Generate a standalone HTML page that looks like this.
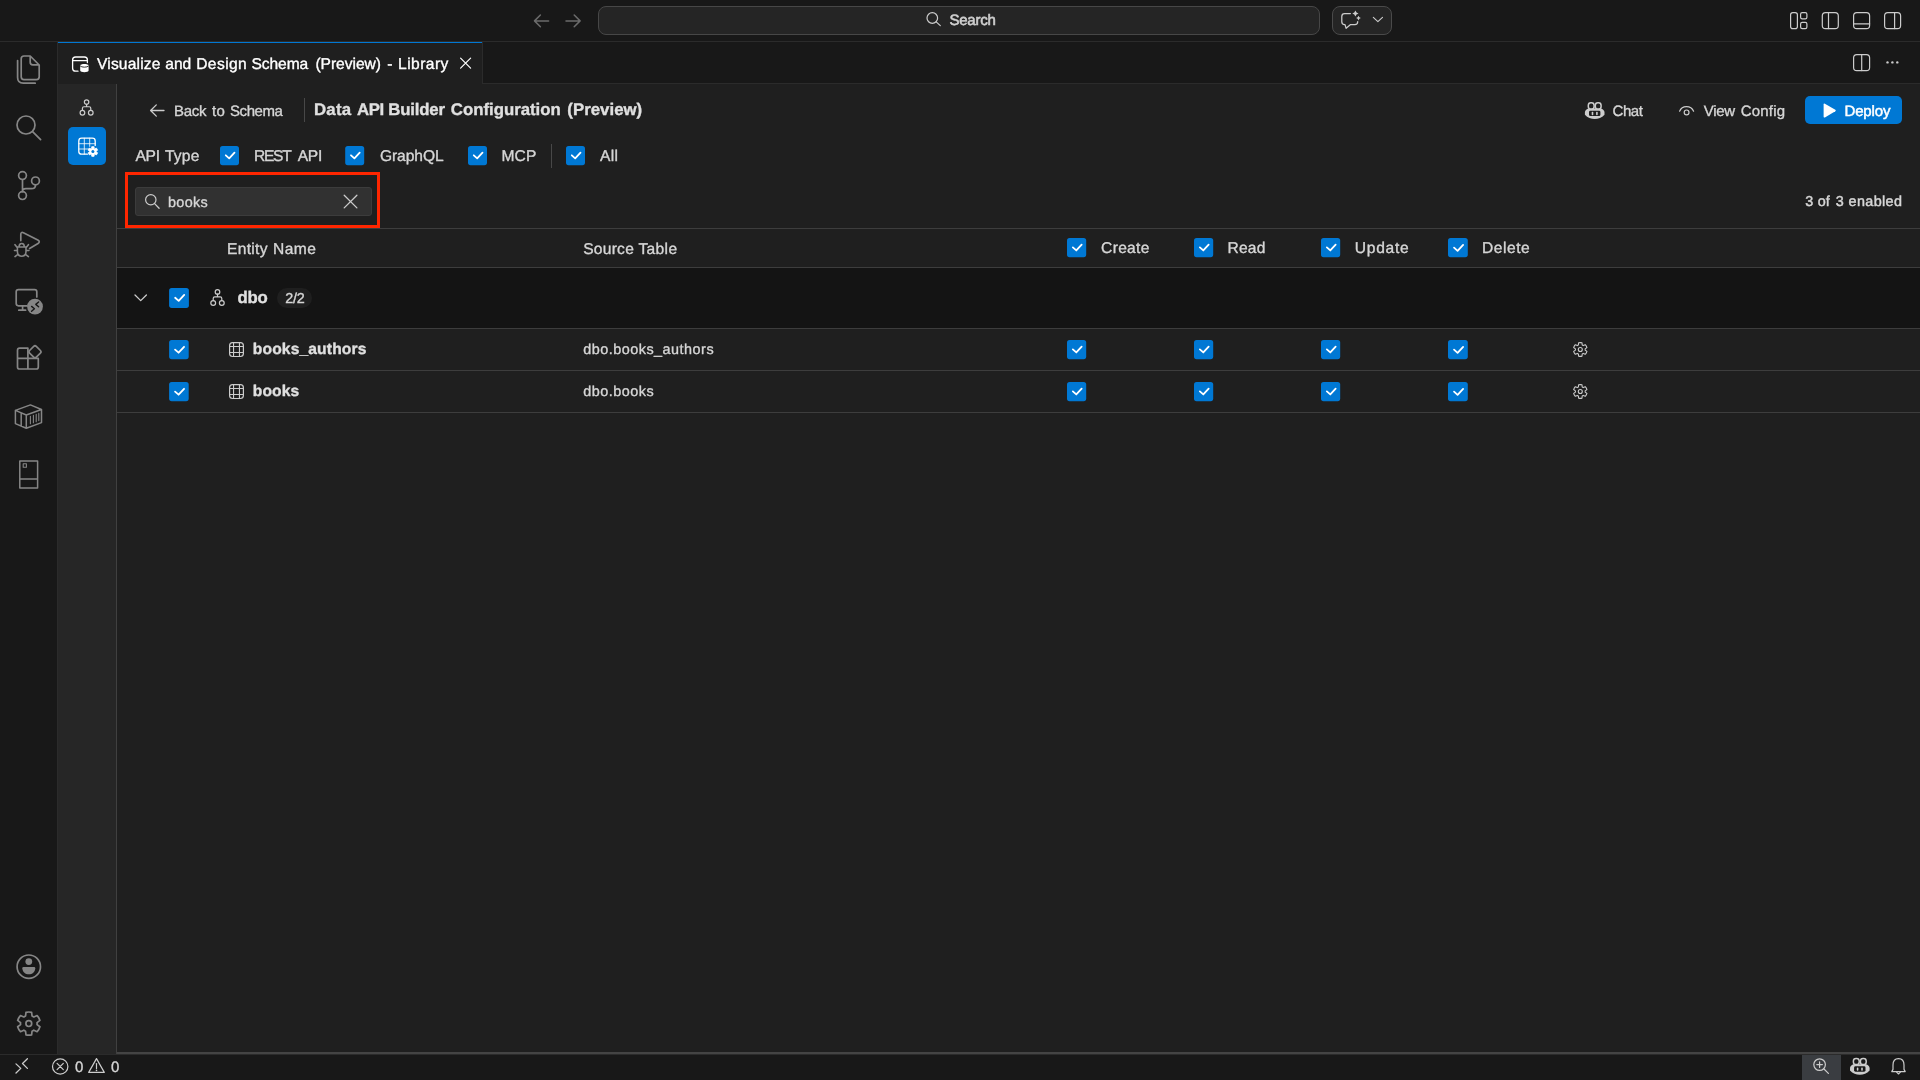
<!DOCTYPE html>
<html lang="en">
<head>
<meta charset="utf-8">
<title>Visualize and Design Schema (Preview) - Library</title>
<style>
html,body{margin:0;padding:0;}
body{width:1920px;height:1080px;overflow:hidden;background:#1f1f1f;position:relative;font-family:"Liberation Sans",sans-serif;}
.a{position:absolute;box-sizing:border-box;}
.t{position:absolute;white-space:pre;font-family:"Liberation Sans",sans-serif;text-rendering:geometricPrecision;-webkit-text-stroke:0.35px currentColor;}
svg{position:absolute;overflow:visible;}
.cb{position:absolute;width:19px;height:19px;background:#0078d4;border-radius:2.5px;}
.cb svg{left:0;top:0;}
.hl{position:absolute;height:1px;background:#2b2b2b;}
.vl{position:absolute;width:1px;background:#2b2b2b;}
</style>
</head>
<body>
<!-- ===== title bar ===== -->
<div class="a" id="titlebar" style="left:0;top:0;width:1920px;height:41px;background:#181818;"></div>
<div class="hl" style="left:0;top:41px;width:1920px;"></div>
<div class="a" id="cmdcenter" style="left:598px;top:6px;width:722px;height:29px;background:#252525;border:1px solid #474747;border-radius:8px;"></div>
<div class="a" id="chatbtn" style="left:1332px;top:6px;width:60px;height:29px;background:#252525;border:1px solid #4a4a4a;border-radius:8px;"></div>

<!-- ===== activity bar ===== -->
<div class="a" id="activitybar" style="left:0;top:42px;width:57px;height:1012px;background:#181818;"></div>
<div class="vl" style="left:57px;top:42px;height:1012px;"></div>

<!-- ===== tab bar ===== -->
<div class="a" id="tabbar" style="left:58px;top:42px;width:1862px;height:41px;background:#181818;"></div>
<div class="hl" style="left:58px;top:83px;width:1862px;"></div>
<div class="a" id="tab" style="left:58px;top:42px;width:424px;height:42px;background:#1f1f1f;border-top:1px solid #0078d4;"></div>
<div class="vl" style="left:482px;top:42px;height:42px;"></div>

<!-- ===== inner sidebar ===== -->
<div class="a" id="innerside" style="left:58px;top:84px;width:58px;height:970px;background:#262626;"></div>
<div class="vl" style="left:116px;top:84px;height:970px;background:#404040;"></div>
<div class="a" id="activebtn" style="left:68px;top:127px;width:38px;height:38px;background:#0078d4;border-radius:5px;"></div>

<!-- ===== toolbar ===== -->
<div class="vl" style="left:304px;top:98px;height:24px;background:#484848;"></div>
<div class="a" id="deploy" style="left:1805px;top:96px;width:97px;height:28px;background:#0078d4;border-radius:5px;"></div>
<div class="vl" style="left:551px;top:144px;height:24px;background:#484848;"></div>

<!-- ===== search ===== -->
<div class="a" id="searchbox" style="left:135px;top:187px;width:237px;height:29px;background:#313131;border:1px solid #3c3c3c;border-radius:3px;"></div>
<div class="a" id="redrect" style="left:125px;top:172px;width:255px;height:56px;border:3px solid #ff2600;"></div>

<!-- ===== table ===== -->
<div class="hl" style="left:117px;top:228px;width:1803px;background:#3d3d3d;"></div>
<div class="hl" style="left:117px;top:267px;width:1803px;background:#3d3d3d;"></div>
<div class="a" id="grouprow" style="left:117px;top:268px;width:1803px;height:60px;background:#141414;"></div>
<div class="hl" style="left:117px;top:328px;width:1803px;background:#3d3d3d;"></div>
<div class="hl" style="left:117px;top:370px;width:1803px;background:#3d3d3d;"></div>
<div class="hl" style="left:117px;top:412px;width:1803px;background:#3d3d3d;"></div>
<div class="a" id="pill" style="left:277px;top:288px;width:35px;height:20px;background:#1f1f1f;border-radius:10px;"></div>

<!-- checkboxes -->


<!-- ===== status bar ===== -->
<div class="hl" style="left:117px;top:1052px;width:1803px;height:2px;background:#444444;"></div>
<div class="a" id="statusbar" style="left:0;top:1055px;width:1920px;height:25px;background:#181818;"></div>
<div class="hl" style="left:0;top:1054px;width:1920px;"></div>
<div class="a" id="zoombg" style="left:1802px;top:1055px;width:39px;height:25px;background:#3a3d41;"></div>

<!-- ===== icons ===== -->
<svg id="ov" width="1920" height="1080" viewBox="0 0 1920 1080" style="left:0;top:0;pointer-events:none">
<rect x="220" y="146" width="19" height="19.2" rx="2.6" fill="#0078d4"/>
<path d="M225.80 155.30L229.20 158.30L234.50 152.60" fill="none" stroke="#fff" stroke-width="1.8" stroke-linecap="round" stroke-linejoin="round"/>
<rect x="345.2" y="146" width="19" height="19.2" rx="2.6" fill="#0078d4"/>
<path d="M351.00 155.30L354.40 158.30L359.70 152.60" fill="none" stroke="#fff" stroke-width="1.8" stroke-linecap="round" stroke-linejoin="round"/>
<rect x="468" y="146" width="19" height="19.2" rx="2.6" fill="#0078d4"/>
<path d="M473.80 155.30L477.20 158.30L482.50 152.60" fill="none" stroke="#fff" stroke-width="1.8" stroke-linecap="round" stroke-linejoin="round"/>
<rect x="566" y="146" width="19" height="19.2" rx="2.6" fill="#0078d4"/>
<path d="M571.80 155.30L575.20 158.30L580.50 152.60" fill="none" stroke="#fff" stroke-width="1.8" stroke-linecap="round" stroke-linejoin="round"/>
<rect x="1067" y="238" width="19.2" height="19.2" rx="2.6" fill="#0078d4"/>
<path d="M1072.86 247.40L1076.30 250.43L1081.65 244.67" fill="none" stroke="#fff" stroke-width="1.8" stroke-linecap="round" stroke-linejoin="round"/>
<rect x="1067" y="340" width="19.2" height="19.2" rx="2.6" fill="#0078d4"/>
<path d="M1072.86 349.40L1076.30 352.43L1081.65 346.67" fill="none" stroke="#fff" stroke-width="1.8" stroke-linecap="round" stroke-linejoin="round"/>
<rect x="1067" y="382" width="19.2" height="19.2" rx="2.6" fill="#0078d4"/>
<path d="M1072.86 391.40L1076.30 394.43L1081.65 388.67" fill="none" stroke="#fff" stroke-width="1.8" stroke-linecap="round" stroke-linejoin="round"/>
<rect x="1194" y="238" width="19.2" height="19.2" rx="2.6" fill="#0078d4"/>
<path d="M1199.86 247.40L1203.30 250.43L1208.65 244.67" fill="none" stroke="#fff" stroke-width="1.8" stroke-linecap="round" stroke-linejoin="round"/>
<rect x="1194" y="340" width="19.2" height="19.2" rx="2.6" fill="#0078d4"/>
<path d="M1199.86 349.40L1203.30 352.43L1208.65 346.67" fill="none" stroke="#fff" stroke-width="1.8" stroke-linecap="round" stroke-linejoin="round"/>
<rect x="1194" y="382" width="19.2" height="19.2" rx="2.6" fill="#0078d4"/>
<path d="M1199.86 391.40L1203.30 394.43L1208.65 388.67" fill="none" stroke="#fff" stroke-width="1.8" stroke-linecap="round" stroke-linejoin="round"/>
<rect x="1321" y="238" width="19.2" height="19.2" rx="2.6" fill="#0078d4"/>
<path d="M1326.86 247.40L1330.30 250.43L1335.65 244.67" fill="none" stroke="#fff" stroke-width="1.8" stroke-linecap="round" stroke-linejoin="round"/>
<rect x="1321" y="340" width="19.2" height="19.2" rx="2.6" fill="#0078d4"/>
<path d="M1326.86 349.40L1330.30 352.43L1335.65 346.67" fill="none" stroke="#fff" stroke-width="1.8" stroke-linecap="round" stroke-linejoin="round"/>
<rect x="1321" y="382" width="19.2" height="19.2" rx="2.6" fill="#0078d4"/>
<path d="M1326.86 391.40L1330.30 394.43L1335.65 388.67" fill="none" stroke="#fff" stroke-width="1.8" stroke-linecap="round" stroke-linejoin="round"/>
<rect x="1448" y="238" width="19.8" height="19.2" rx="2.6" fill="#0078d4"/>
<path d="M1454.04 247.69L1457.59 250.82L1463.11 244.88" fill="none" stroke="#fff" stroke-width="1.8" stroke-linecap="round" stroke-linejoin="round"/>
<rect x="1448" y="340" width="19.8" height="19.2" rx="2.6" fill="#0078d4"/>
<path d="M1454.04 349.69L1457.59 352.82L1463.11 346.88" fill="none" stroke="#fff" stroke-width="1.8" stroke-linecap="round" stroke-linejoin="round"/>
<rect x="1448" y="382" width="19.8" height="19.2" rx="2.6" fill="#0078d4"/>
<path d="M1454.04 391.69L1457.59 394.82L1463.11 388.88" fill="none" stroke="#fff" stroke-width="1.8" stroke-linecap="round" stroke-linejoin="round"/>
<rect x="169.1" y="288.1" width="19.8" height="19.8" rx="2.6" fill="#0078d4"/>
<path d="M175.14 297.79L178.69 300.92L184.21 294.98" fill="none" stroke="#fff" stroke-width="1.8" stroke-linecap="round" stroke-linejoin="round"/>
<rect x="169.1" y="340" width="19.6" height="19.2" rx="2.6" fill="#0078d4"/>
<path d="M175.08 349.59L178.59 352.69L184.06 346.81" fill="none" stroke="#fff" stroke-width="1.8" stroke-linecap="round" stroke-linejoin="round"/>
<rect x="169.1" y="382" width="19.6" height="19.2" rx="2.6" fill="#0078d4"/>
<path d="M175.08 391.59L178.59 394.69L184.06 388.81" fill="none" stroke="#fff" stroke-width="1.8" stroke-linecap="round" stroke-linejoin="round"/>
<path d="M548.6 20.9H534.6M540.4 15L534.5 20.9L540.4 26.8" fill="none" stroke="#6b6b6b" stroke-width="1.5" stroke-linecap="round" stroke-linejoin="round" />
<path d="M566 20.9H580M574.2 15L580.1 20.9L574.2 26.8" fill="none" stroke="#6b6b6b" stroke-width="1.5" stroke-linecap="round" stroke-linejoin="round" />
<circle cx="932.3" cy="18" r="5.3" fill="none" stroke="#cccccc" stroke-width="1.2"/>
<path d="M936.2 21.9L940.3 25.6" fill="none" stroke="#cccccc" stroke-width="1.2" stroke-linecap="round" stroke-linejoin="round" />
<path d="M1350.4 13.6H1344.6Q1341.8 13.6 1341.8 16.4V21.8Q1341.8 24.6 1344.6 24.6H1345L1346.1 28.3L1350.6 24.6H1354.9Q1357.7 24.6 1357.7 21.8V21.6" fill="none" stroke="#cccccc" stroke-width="1.25" stroke-linecap="round" stroke-linejoin="round" />
<path d="M1355.4 10.4Q1356.082 12.818 1358.5 13.5Q1356.082 14.182 1355.4 16.6Q1354.718 14.182 1352.3000000000002 13.5Q1354.718 12.818 1355.4 10.4Z" fill="#cccccc" />
<path d="M1358.5 15.700000000000001Q1359.028 17.572000000000003 1360.9 18.1Q1359.028 18.628 1358.5 20.5Q1357.972 18.628 1356.1 18.1Q1357.972 17.572000000000003 1358.5 15.700000000000001Z" fill="#cccccc" />
<path d="M1373.3 17.3L1377.9 21.7L1382.5 17.3" fill="none" stroke="#cccccc" stroke-width="1.1" stroke-linecap="round" stroke-linejoin="round" />
<rect x="1790.6" y="12.6" width="6.8" height="16" rx="2.2" fill="none" stroke="#cccccc" stroke-width="1.2"/>
<rect x="1800.6" y="12.6" width="6.3" height="6.3" rx="1.6" fill="none" stroke="#cccccc" stroke-width="1.2"/>
<rect x="1800.6" y="22.3" width="6.3" height="6.3" rx="1.6" fill="none" stroke="#cccccc" stroke-width="1.2"/>
<rect x="1822.3" y="12.6" width="16" height="16" rx="3.2" fill="none" stroke="#cccccc" stroke-width="1.2"/>
<path d="M1828.5 12.6V28.6" fill="none" stroke="#cccccc" stroke-width="1.2" stroke-linecap="round" stroke-linejoin="round" />
<rect x="1853.6" y="12.6" width="16" height="16" rx="3.2" fill="none" stroke="#cccccc" stroke-width="1.2"/>
<path d="M1853.6 23.8H1869.6" fill="none" stroke="#cccccc" stroke-width="1.2" stroke-linecap="round" stroke-linejoin="round" />
<rect x="1884.6" y="12.6" width="16" height="16" rx="3.2" fill="none" stroke="#cccccc" stroke-width="1.2"/>
<path d="M1894.6 12.6V28.6" fill="none" stroke="#cccccc" stroke-width="1.2" stroke-linecap="round" stroke-linejoin="round" />
<rect x="1853.6" y="54.6" width="16" height="16" rx="3.2" fill="none" stroke="#cccccc" stroke-width="1.2"/>
<path d="M1861.7 54.6V70.6" fill="none" stroke="#cccccc" stroke-width="1.2" stroke-linecap="round" stroke-linejoin="round" />
<circle cx="1887.5" cy="62.4" r="1.2" fill="#cccccc"/>
<circle cx="1892.4" cy="62.4" r="1.2" fill="#cccccc"/>
<circle cx="1897.3" cy="62.4" r="1.2" fill="#cccccc"/>
<path d="M78 71.2H75.6Q72.6 71.2 72.6 68.2V60Q72.6 57 75.6 57H84.4Q87.4 57 87.4 60V62.5M72.6 60.6H87.4" fill="none" stroke="#ffffff" stroke-width="1.3" stroke-linecap="round" stroke-linejoin="round" />
<path d="M80.2 65.6C80.2 63.6 88.6 63.6 88.6 65.6V70.6C88.6 72.8 80.2 72.8 80.2 70.6Z" fill="#ffffff" />
<path d="M80.4 66.2C81.5 67.6 87.3 67.6 88.4 66.2" fill="none" stroke="#1f1f1f" stroke-width="0.9" stroke-linecap="round" stroke-linejoin="round" />
<path d="M460.6 58.1L470.6 68.1M470.6 58.1L460.6 68.1" fill="none" stroke="#ffffff" stroke-width="1.2" stroke-linecap="round" stroke-linejoin="round" />
<path d="M24 56H30.2L39.2 65V76.8Q39.2 79.6 36.4 79.6H24Q21.2 79.6 21.2 76.8V58.8Q21.2 56 24 56ZM30.2 56.4V62.2Q30.2 64.8 32.8 64.8H38.8" fill="none" stroke="#868686" stroke-width="1.7" stroke-linecap="round" stroke-linejoin="round" />
<path d="M17.6 60.6V77.6Q17.6 83.2 23.2 83.2H35.2" fill="none" stroke="#868686" stroke-width="1.7" stroke-linecap="round" stroke-linejoin="round" />
<circle cx="26" cy="125" r="9" fill="none" stroke="#868686" stroke-width="1.7"/>
<path d="M32.6 131.6L40.6 139.6" fill="none" stroke="#868686" stroke-width="1.7" stroke-linecap="round" stroke-linejoin="round" />
<circle cx="22.5" cy="175.6" r="3.9" fill="none" stroke="#868686" stroke-width="1.7"/>
<circle cx="22.5" cy="195.6" r="3.9" fill="none" stroke="#868686" stroke-width="1.7"/>
<circle cx="35.5" cy="180.9" r="3.9" fill="none" stroke="#868686" stroke-width="1.7"/>
<path d="M22.5 179.6V191.6M35.5 184.9Q35.5 188.6 31.4 188.6H25.8Q22.5 188.6 22.5 191" fill="none" stroke="#868686" stroke-width="1.7" stroke-linecap="round" stroke-linejoin="round" />
<path d="M20.8 240.6V234.4Q20.8 231.6 23.4 232.8L37.8 240Q40.6 241.6 38 243.6L29.6 248.5" fill="none" stroke="#868686" stroke-width="1.7" stroke-linecap="round" stroke-linejoin="round" />
<path d="M17.4 247H26V251.6Q26 256.2 21.7 256.2Q17.4 256.2 17.4 251.6ZM19.1 246.8C19.1 242.4 24.3 242.4 24.3 246.8M17.2 247.4L15 244.7M26.2 247.4L28.4 244.7M17.2 250.5H14.5M26.2 250.5H28.9M17.9 254.3L15 256.6M25.5 254.3L28.4 256.6" fill="none" stroke="#868686" stroke-width="1.6" stroke-linecap="round" stroke-linejoin="round" />
<path d="M27 305.8H18.4Q16.2 305.8 16.2 303.6V291.8Q16.2 289.6 18.4 289.6H34.6Q36.8 289.6 36.8 291.8V297M22.6 306V310.2M18.8 310.2H25.6" fill="none" stroke="#868686" stroke-width="1.7" stroke-linecap="round" stroke-linejoin="round" />
<circle cx="35" cy="306.6" r="7.9" fill="#868686"/>
<path d="M31.6 306.4L34.4 308.8L31.6 311.2M38.6 302L35.8 304.4L38.6 306.8" fill="none" stroke="#181818" stroke-width="1.4" stroke-linecap="round" stroke-linejoin="round" />
<path d="M27.9 348.2H19.6Q17.5 348.2 17.5 350.3V366.9Q17.5 369 19.6 369H36.2Q38.3 369 38.3 366.9V358.4H17.5M27.9 348.2V369" fill="none" stroke="#868686" stroke-width="1.7" stroke-linecap="round" stroke-linejoin="round" />
<path d="M33.7 346.4Q35 345.1 36.3 346.4L40.4 350.5Q41.7 351.8 40.4 353.1L36.3 357.2Q35 358.5 33.7 357.2L29.6 353.1Q28.3 351.8 29.6 350.5Z" fill="none" stroke="#868686" stroke-width="1.7" stroke-linecap="round" stroke-linejoin="round" />
<path d="M30.4 404.9L41.5 409.5V422.6L26.3 428.2L15.4 423.6V410.4ZM15.4 410.4L26.3 415L41.5 409.5M26.3 415V428.2M21.2 412.9V426" fill="none" stroke="#868686" stroke-width="1.5" stroke-linecap="round" stroke-linejoin="round" />
<path d="M30.4 416.4V423.8M33.4 415.3V422.7M36.2 414.3V421.7M38.8 413.4V420.6" fill="none" stroke="#868686" stroke-width="1.1" stroke-linecap="round" stroke-linejoin="round" />
<path d="M19.8 461H37.6V488H19.8ZM19.8 478.9H37.6" fill="none" stroke="#868686" stroke-width="1.5" stroke-linecap="round" stroke-linejoin="round" />
<path d="M23.2 463.8H26.4V467.2H23.2Z" fill="none" stroke="#868686" stroke-width="1.1" stroke-linecap="round" stroke-linejoin="round" />
<circle cx="28.8" cy="966.7" r="11.7" fill="none" stroke="#868686" stroke-width="1.7"/>
<circle cx="28.8" cy="961.6" r="3.4" fill="#868686"/>
<path d="M23.6 967H34Q35.4 967 35.3 968.4C34.8 972 32.4 974.3 28.8 974.3C25.2 974.3 22.8 972 22.3 968.4Q22.2 967 23.6 967Z" fill="#868686" />
<path d="M25.56 1015.96L25.99 1012.34A11.60 11.60 0 0 1 31.61 1012.34L32.04 1015.96A8.30 8.30 0 0 1 33.80 1016.97L37.14 1015.54A11.60 11.60 0 0 1 39.95 1020.40L37.04 1022.59A8.30 8.30 0 0 1 37.04 1024.61L39.95 1026.80A11.60 11.60 0 0 1 37.14 1031.66L33.80 1030.23A8.30 8.30 0 0 1 32.04 1031.24L31.61 1034.86A11.60 11.60 0 0 1 25.99 1034.86L25.56 1031.24A8.30 8.30 0 0 1 23.80 1030.23L20.46 1031.66A11.60 11.60 0 0 1 17.65 1026.80L20.56 1024.61A8.30 8.30 0 0 1 20.56 1022.59L17.65 1020.40A11.60 11.60 0 0 1 20.46 1015.54L23.80 1016.97A8.30 8.30 0 0 1 25.56 1015.96Z" fill="none" stroke="#868686" stroke-width="1.7" stroke-linejoin="round"/>
<circle cx="28.8" cy="1023.6" r="2.9" fill="none" stroke="#868686" stroke-width="1.7"/>
<circle cx="86.60" cy="102.02" r="2.23" fill="none" stroke="#cccccc" stroke-width="1.2"/><circle cx="82.43" cy="112.79" r="2.33" fill="none" stroke="#cccccc" stroke-width="1.2"/><circle cx="90.77" cy="112.79" r="2.33" fill="none" stroke="#cccccc" stroke-width="1.2"/><path d="M86.60 104.25V106.77M82.43 110.46V108.32Q82.43 106.77 83.98 106.77H89.22Q90.77 106.77 90.77 108.32V110.46" fill="none" stroke="#cccccc" stroke-width="1.2" stroke-linecap="round" stroke-linejoin="round" />
<path d="M87.4 154.2H81.6Q78.8 154.2 78.8 151.4V141Q78.8 138.2 81.6 138.2H92.4Q95.2 138.2 95.2 141V145.4" fill="none" stroke="#ffffff" stroke-width="1.3" stroke-linecap="round" stroke-linejoin="round" />
<path d="M78.8 143.7H95.2M78.8 149H89M84.3 138.2V154.2M89.7 138.2V146.4" fill="none" stroke="#ffffff" stroke-width="1.0" stroke-linecap="round" stroke-linejoin="round" opacity="0.8"/>
<path d="M91.56 148.49L91.63 146.77A4.90 4.90 0 0 1 94.17 146.77L94.24 148.49A3.30 3.30 0 0 1 94.84 148.83L96.36 148.04A4.90 4.90 0 0 1 97.63 150.23L96.18 151.16A3.30 3.30 0 0 1 96.18 151.84L97.63 152.77A4.90 4.90 0 0 1 96.36 154.96L94.84 154.17A3.30 3.30 0 0 1 94.24 154.51L94.17 156.23A4.90 4.90 0 0 1 91.63 156.23L91.56 154.51A3.30 3.30 0 0 1 90.96 154.17L89.44 154.96A4.90 4.90 0 0 1 88.17 152.77L89.62 151.84A3.30 3.30 0 0 1 89.62 151.16L88.17 150.23A4.90 4.90 0 0 1 89.44 148.04L90.96 148.83A3.30 3.30 0 0 1 91.56 148.49Z" fill="#ffffff" stroke="#ffffff" stroke-width="0.7" stroke-linejoin="round"/>
<circle cx="92.9" cy="151.5" r="1.5" fill="#0078d4"/>
<path d="M164 110.5H150.8M156.3 104.9L150.6 110.5L156.3 116.1" fill="none" stroke="#cccccc" stroke-width="1.3" stroke-linecap="round" stroke-linejoin="round" />
<path d="M1588.3 108.6H1601.1000000000001Q1604.5 110.0 1604.5 112.6V114.8Q1600.3 119.1 1594.7 119.1Q1589.1000000000001 119.1 1584.9 114.8V112.6Q1584.9 110.0 1588.3 108.6Z" fill="#cccccc" /><rect x="1589.0" y="110.69999999999999" width="11.4" height="5.4" rx="1.4" fill="#1f1f1f"/><rect x="1591.7" y="111.8" width="1.6" height="3.4" rx="0.7" fill="#cccccc"/><rect x="1596.1000000000001" y="111.8" width="1.6" height="3.4" rx="0.7" fill="#cccccc"/><rect x="1588.3" y="102.8" width="5.8" height="6.2" rx="2.6" fill="#1f1f1f" stroke="#cccccc" stroke-width="1.5"/><rect x="1595.3" y="102.8" width="5.8" height="6.2" rx="2.6" fill="#1f1f1f" stroke="#cccccc" stroke-width="1.5"/>
<path d="M1679.6 111.2C1682 105 1691 105 1693.6 111.2" fill="none" stroke="#cccccc" stroke-width="1.2" stroke-linecap="round" stroke-linejoin="round" />
<circle cx="1686.6" cy="112.4" r="2.4" fill="none" stroke="#cccccc" stroke-width="1.2"/>
<path d="M1823.6 104.4Q1823.6 103 1824.9 103.7L1835.3 109.8Q1836.4 110.5 1835.3 111.2L1824.9 117.4Q1823.6 118 1823.6 116.8Z" fill="#ffffff" />
<circle cx="150.8" cy="199.75" r="5.2" fill="none" stroke="#cccccc" stroke-width="1.2"/>
<path d="M154.6 203.6L159.1 208.3" fill="none" stroke="#cccccc" stroke-width="1.3" stroke-linecap="round" stroke-linejoin="round" />
<path d="M344.2 195.3L356.9 207.9M356.9 195.3L344.2 207.9" fill="none" stroke="#cccccc" stroke-width="1.3" stroke-linecap="round" stroke-linejoin="round" />
<path d="M135 295L140.7 300.6L146.4 295" fill="none" stroke="#cccccc" stroke-width="1.3" stroke-linecap="round" stroke-linejoin="round" />
<circle cx="217.50" cy="291.90" r="2.30" fill="none" stroke="#cccccc" stroke-width="1.2"/><circle cx="213.20" cy="303.00" r="2.40" fill="none" stroke="#cccccc" stroke-width="1.2"/><circle cx="221.80" cy="303.00" r="2.40" fill="none" stroke="#cccccc" stroke-width="1.2"/><path d="M217.50 294.20V296.80M213.20 300.60V298.40Q213.20 296.80 214.80 296.80H220.20Q221.80 296.80 221.80 298.40V300.60" fill="none" stroke="#cccccc" stroke-width="1.2" stroke-linecap="round" stroke-linejoin="round" />
<rect x="229.6" y="342.70000000000005" width="13.8" height="13.8" rx="3.0" fill="none" stroke="#cccccc" stroke-width="1.2"/><path d="M233.55 342.70000000000005V356.50000000000006M239.45 342.70000000000005V356.50000000000006M229.6 346.55H243.4M229.6 352.45H243.4" fill="none" stroke="#cccccc" stroke-width="1.1" stroke-linecap="round" stroke-linejoin="round" />
<path d="M1578.39 344.99L1578.63 342.80A6.90 6.90 0 0 1 1581.97 342.80L1582.21 344.99A4.90 4.90 0 0 1 1583.25 345.59L1585.26 344.71A6.90 6.90 0 0 1 1586.93 347.60L1585.16 348.90A4.90 4.90 0 0 1 1585.16 350.10L1586.93 351.40A6.90 6.90 0 0 1 1585.26 354.29L1583.25 353.41A4.90 4.90 0 0 1 1582.21 354.01L1581.97 356.20A6.90 6.90 0 0 1 1578.63 356.20L1578.39 354.01A4.90 4.90 0 0 1 1577.35 353.41L1575.34 354.29A6.90 6.90 0 0 1 1573.67 351.40L1575.44 350.10A4.90 4.90 0 0 1 1575.44 348.90L1573.67 347.60A6.90 6.90 0 0 1 1575.34 344.71L1577.35 345.59A4.90 4.90 0 0 1 1578.39 344.99Z" fill="none" stroke="#cccccc" stroke-width="1.1" stroke-linejoin="round"/><circle cx="1580.3" cy="349.5" r="2.0" fill="none" stroke="#cccccc" stroke-width="1.1"/>
<rect x="229.6" y="384.70000000000005" width="13.8" height="13.8" rx="3.0" fill="none" stroke="#cccccc" stroke-width="1.2"/><path d="M233.55 384.70000000000005V398.50000000000006M239.45 384.70000000000005V398.50000000000006M229.6 388.55H243.4M229.6 394.45H243.4" fill="none" stroke="#cccccc" stroke-width="1.1" stroke-linecap="round" stroke-linejoin="round" />
<path d="M1578.39 386.99L1578.63 384.80A6.90 6.90 0 0 1 1581.97 384.80L1582.21 386.99A4.90 4.90 0 0 1 1583.25 387.59L1585.26 386.71A6.90 6.90 0 0 1 1586.93 389.60L1585.16 390.90A4.90 4.90 0 0 1 1585.16 392.10L1586.93 393.40A6.90 6.90 0 0 1 1585.26 396.29L1583.25 395.41A4.90 4.90 0 0 1 1582.21 396.01L1581.97 398.20A6.90 6.90 0 0 1 1578.63 398.20L1578.39 396.01A4.90 4.90 0 0 1 1577.35 395.41L1575.34 396.29A6.90 6.90 0 0 1 1573.67 393.40L1575.44 392.10A4.90 4.90 0 0 1 1575.44 390.90L1573.67 389.60A6.90 6.90 0 0 1 1575.34 386.71L1577.35 387.59A4.90 4.90 0 0 1 1578.39 386.99Z" fill="none" stroke="#cccccc" stroke-width="1.1" stroke-linejoin="round"/><circle cx="1580.3" cy="391.5" r="2.0" fill="none" stroke="#cccccc" stroke-width="1.1"/>
<path d="M16 1063.9L20.8 1068.4L16 1073" fill="none" stroke="#cccccc" stroke-width="1.3" stroke-linecap="round" stroke-linejoin="round" />
<path d="M27.4 1058.8L22.5 1063.5L27.4 1068.4" fill="none" stroke="#cccccc" stroke-width="1.3" stroke-linecap="round" stroke-linejoin="round" />
<circle cx="60.2" cy="1066.5" r="7.7" fill="none" stroke="#cccccc" stroke-width="1.2"/>
<path d="M57.1 1063.4L63.3 1069.6M63.3 1063.4L57.1 1069.6" fill="none" stroke="#cccccc" stroke-width="1.2" stroke-linecap="round" stroke-linejoin="round" />
<path d="M96.5 1058.6L104.3 1072.4H88.7Z" fill="none" stroke="#cccccc" stroke-width="1.2" stroke-linecap="round" stroke-linejoin="round" />
<path d="M96.5 1063.6V1068.4" fill="none" stroke="#cccccc" stroke-width="1.2" stroke-linecap="round" stroke-linejoin="round" />
<circle cx="96.5" cy="1070.4" r="0.8" fill="#cccccc"/>
<circle cx="1819.6" cy="1064.6" r="5.8" fill="none" stroke="#cccccc" stroke-width="1.2"/>
<path d="M1824 1069L1828.4 1073.4M1816.8 1064.6H1822.4M1819.6 1061.8V1067.4" fill="none" stroke="#cccccc" stroke-width="1.2" stroke-linecap="round" stroke-linejoin="round" />
<path d="M1853.3999999999999 1064.2H1866.2Q1869.6 1065.6000000000001 1869.6 1068.2V1070.4Q1865.3999999999999 1074.7 1859.8 1074.7Q1854.2 1074.7 1850.0 1070.4V1068.2Q1850.0 1065.6000000000001 1853.3999999999999 1064.2Z" fill="#cccccc" /><rect x="1854.1" y="1066.3" width="11.4" height="5.4" rx="1.4" fill="#181818"/><rect x="1856.8" y="1067.4" width="1.6" height="3.4" rx="0.7" fill="#cccccc"/><rect x="1861.2" y="1067.4" width="1.6" height="3.4" rx="0.7" fill="#cccccc"/><rect x="1853.3999999999999" y="1058.4" width="5.8" height="6.2" rx="2.6" fill="#181818" stroke="#cccccc" stroke-width="1.5"/><rect x="1860.3999999999999" y="1058.4" width="5.8" height="6.2" rx="2.6" fill="#181818" stroke="#cccccc" stroke-width="1.5"/>
<path d="M1891.8 1071.6H1905.2L1904 1069.4V1065Q1904 1058.6 1898.5 1058.6Q1893 1058.6 1893 1065V1069.4Z" fill="none" stroke="#cccccc" stroke-width="1.2" stroke-linecap="round" stroke-linejoin="round" />
<path d="M1896.6 1072.2L1898.5 1074L1900.4 1072.2" fill="none" stroke="#cccccc" stroke-width="1.1" stroke-linecap="round" stroke-linejoin="round" />
</svg>

<!-- ===== texts ===== -->
<div id="texts" style="position:absolute;left:0;top:0;width:1920px;height:1080px;will-change:transform;">
<span class="t" style="left:949.50px;top:12px;font-size:15.0px;line-height:17px;color:#d0d0d0;letter-spacing:-0.257px;-webkit-text-stroke-width:0.6px;">Search</span>
<span class="t" style="left:97.00px;top:56px;font-size:15.6px;line-height:17px;color:#ffffff;letter-spacing:0.156px;">Visualize </span>
<span class="t" style="left:165.20px;top:56px;font-size:15.6px;line-height:17px;color:#ffffff;letter-spacing:0.027px;">and </span>
<span class="t" style="left:196.20px;top:56px;font-size:15.6px;line-height:17px;color:#ffffff;letter-spacing:0.406px;">Design </span>
<span class="t" style="left:251.40px;top:56px;font-size:15.6px;line-height:17px;color:#ffffff;letter-spacing:-0.067px;">Schema </span>
<span class="t" style="left:315.40px;top:56px;font-size:15.6px;line-height:17px;color:#ffffff;letter-spacing:-0.032px;">(Preview) </span>
<span class="t" style="left:387.30px;top:56px;font-size:15.6px;line-height:17px;color:#ffffff;letter-spacing:0.000px;">- </span>
<span class="t" style="left:398.10px;top:56px;font-size:15.6px;line-height:17px;color:#ffffff;letter-spacing:0.439px;">Library</span>
<span class="t" style="left:174.00px;top:103px;font-size:15.0px;line-height:17px;color:#d6d6d6;letter-spacing:-0.316px;">Back </span>
<span class="t" style="left:212.10px;top:103px;font-size:15.0px;line-height:17px;color:#d6d6d6;letter-spacing:0.333px;">to </span>
<span class="t" style="left:230.00px;top:103px;font-size:15.0px;line-height:17px;color:#d6d6d6;letter-spacing:-0.417px;">Schema</span>
<span class="t" style="left:314.00px;top:100px;font-size:16.8px;line-height:19px;color:#e0e0e0;letter-spacing:0.220px;font-weight:700;">Data </span>
<span class="t" style="left:357.00px;top:100px;font-size:16.8px;line-height:19px;color:#e0e0e0;letter-spacing:-0.456px;font-weight:700;">API </span>
<span class="t" style="left:388.20px;top:100px;font-size:16.8px;line-height:19px;color:#e0e0e0;letter-spacing:-0.163px;font-weight:700;">Builder </span>
<span class="t" style="left:450.80px;top:100px;font-size:16.8px;line-height:19px;color:#e0e0e0;letter-spacing:-0.003px;font-weight:700;">Configuration </span>
<span class="t" style="left:567.30px;top:100px;font-size:16.8px;line-height:19px;color:#e0e0e0;letter-spacing:0.034px;font-weight:700;">(Preview)</span>
<span class="t" style="left:1612.50px;top:103px;font-size:15.0px;line-height:17px;color:#d6d6d6;letter-spacing:-0.406px;">Chat</span>
<span class="t" style="left:1703.80px;top:103px;font-size:15.0px;line-height:17px;color:#d6d6d6;letter-spacing:-0.336px;">View </span>
<span class="t" style="left:1740.70px;top:103px;font-size:15.0px;line-height:17px;color:#d6d6d6;letter-spacing:0.217px;">Config</span>
<span class="t" style="left:1844.40px;top:103px;font-size:15.0px;line-height:17px;color:#ffffff;letter-spacing:-0.098px;-webkit-text-stroke-width:0.5px;">Deploy</span>
<span class="t" style="left:135.40px;top:148px;font-size:15.6px;line-height:17px;color:#d6d6d6;letter-spacing:-0.251px;">API </span>
<span class="t" style="left:165.00px;top:148px;font-size:15.6px;line-height:17px;color:#d6d6d6;letter-spacing:0.189px;">Type</span>
<span class="t" style="left:253.90px;top:148px;font-size:15.6px;line-height:17px;color:#d6d6d6;letter-spacing:-1.221px;">REST </span>
<span class="t" style="left:297.80px;top:148px;font-size:15.6px;line-height:17px;color:#d6d6d6;letter-spacing:-0.351px;">API</span>
<span class="t" style="left:379.90px;top:148px;font-size:15.6px;line-height:17px;color:#d6d6d6;letter-spacing:-0.061px;">GraphQL</span>
<span class="t" style="left:501.50px;top:148px;font-size:15.6px;line-height:17px;color:#d6d6d6;letter-spacing:0.124px;">MCP</span>
<span class="t" style="left:600.10px;top:148px;font-size:15.6px;line-height:17px;color:#d6d6d6;letter-spacing:0.267px;">All</span>
<span class="t" style="left:168.10px;top:195px;font-size:14.4px;line-height:16px;color:#d6d6d6;letter-spacing:0.274px;">books</span>
<span class="t" style="left:1805.15px;top:194px;font-size:14.4px;line-height:16px;color:#d6d6d6;letter-spacing:0.000px;-webkit-text-stroke-width:0.45px;">3 </span>
<span class="t" style="left:1817.65px;top:194px;font-size:14.4px;line-height:16px;color:#d6d6d6;letter-spacing:-0.003px;-webkit-text-stroke-width:0.45px;">of </span>
<span class="t" style="left:1835.80px;top:194px;font-size:14.4px;line-height:16px;color:#d6d6d6;letter-spacing:0.000px;-webkit-text-stroke-width:0.45px;">3 </span>
<span class="t" style="left:1848.60px;top:194px;font-size:14.4px;line-height:16px;color:#d6d6d6;letter-spacing:0.348px;-webkit-text-stroke-width:0.45px;">enabled</span>
<span class="t" style="left:226.90px;top:241px;font-size:15.6px;line-height:17px;color:#d6d6d6;letter-spacing:0.339px;">Entity </span>
<span class="t" style="left:273.00px;top:241px;font-size:15.6px;line-height:17px;color:#d6d6d6;letter-spacing:0.425px;">Name</span>
<span class="t" style="left:583.15px;top:241px;font-size:15.6px;line-height:17px;color:#d6d6d6;letter-spacing:0.253px;">Source </span>
<span class="t" style="left:638.40px;top:241px;font-size:15.6px;line-height:17px;color:#d6d6d6;letter-spacing:0.349px;">Table</span>
<span class="t" style="left:1101.10px;top:240px;font-size:15.6px;line-height:17px;color:#d6d6d6;letter-spacing:0.294px;">Create</span>
<span class="t" style="left:1227.40px;top:240px;font-size:15.6px;line-height:17px;color:#d6d6d6;letter-spacing:0.231px;">Read</span>
<span class="t" style="left:1354.70px;top:240px;font-size:15.6px;line-height:17px;color:#d6d6d6;letter-spacing:0.758px;">Update</span>
<span class="t" style="left:1482.10px;top:240px;font-size:15.6px;line-height:17px;color:#d6d6d6;letter-spacing:0.499px;">Delete</span>
<span class="t" style="left:237.40px;top:288px;font-size:16.8px;line-height:19px;color:#e0e0e0;letter-spacing:-0.201px;font-weight:700;">dbo</span>
<span class="t" style="left:285.20px;top:291px;font-size:14.4px;line-height:16px;color:#d6d6d6;letter-spacing:-0.201px;">2/2</span>
<span class="t" style="left:252.80px;top:341px;font-size:15.6px;line-height:17px;color:#e0e0e0;letter-spacing:0.150px;font-weight:700;">books_authors</span>
<span class="t" style="left:583.20px;top:342px;font-size:14.4px;line-height:16px;color:#d6d6d6;letter-spacing:0.499px;">dbo.books_authors</span>
<span class="t" style="left:252.80px;top:383px;font-size:15.6px;line-height:17px;color:#e0e0e0;letter-spacing:0.138px;font-weight:700;">books</span>
<span class="t" style="left:583.20px;top:384px;font-size:14.4px;line-height:16px;color:#d6d6d6;letter-spacing:0.498px;">dbo.books</span>
<span class="t" style="left:75.00px;top:1059px;font-size:15.0px;line-height:17px;color:#d6d6d6;letter-spacing:0.000px;">0</span>
<span class="t" style="left:111.10px;top:1059px;font-size:15.0px;line-height:17px;color:#d6d6d6;letter-spacing:0.000px;">0</span>
</div>
</body>
</html>
